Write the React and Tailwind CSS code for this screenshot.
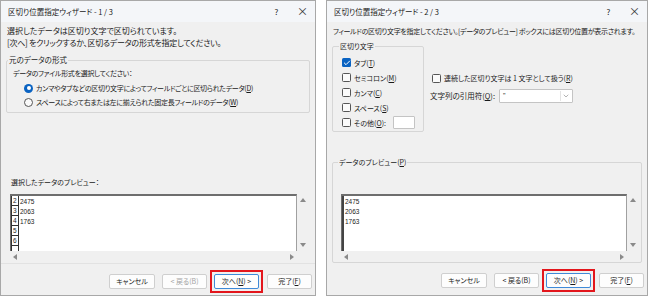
import { Check, ChevronDown } from 'lucide-react'

const U = ({ children }) => <span className="underline underline-offset-1">{children}</span>

function Arrow({ dir }) {
  const pts = {
    up: '0,4 3,0 6,4',
    down: '0,0 3,4 6,0',
    left: '4,0 0,3 4,6',
    right: '0,0 4,3 0,6',
  }[dir]
  const vertical = dir === 'up' || dir === 'down'
  return (
    <svg width={vertical ? 6 : 4} height={vertical ? 4 : 6} viewBox={vertical ? '0 0 6 4' : '0 0 4 6'}>
      <polygon points={pts} fill="#8a8a8a" />
    </svg>
  )
}

function TitleBar({ title }) {
  return (
    <div className="h-[21px] flex items-center pl-[7px] bg-[#f4f6f9] shrink-0">
      <span className="text-[7.5px]">{title}</span>
      <span className="ml-auto w-[27px] text-center text-[8px]">?</span>
      <span className="w-[25px] text-center text-[11px] leading-none text-[#333]">×</span>
    </div>
  )
}

function Btn({ children, disabled, primary, className = '' }) {
  return (
    <div
      className={`h-[15px] w-[45px] flex items-center justify-center rounded-[2px] border bg-[#fdfdfd] text-[7px] ${
        primary ? 'border-[#3f8ad8]' : 'border-[#cfcfcf]'
      } ${disabled ? 'text-[#a3a3a3]' : 'text-[#1a1a1a]'} ${className}`}
    >
      {children}
    </div>
  )
}

function Footer({ backDisabled }) {
  return (
    <div className="h-[32px] shrink-0 flex items-center justify-end pr-[3px] pt-[2px]">
      <Btn className="w-[46px]">キャンセル</Btn>
      <Btn className="ml-[7px]" disabled={backDisabled}>
        {'< 戻る(B)'}
      </Btn>
      <div className="ml-[3px] border-2 border-[#e3161c] p-[2px]">
        <Btn primary>
          次へ(<U>N</U>) &gt;
        </Btn>
      </div>
      <Btn className="ml-[4px]">
        完了(<U>F</U>)
      </Btn>
    </div>
  )
}

function Radio({ on }) {
  return on ? (
    <div className="w-[9px] h-[9px] rounded-full bg-[#0a63c2] flex items-center justify-center shrink-0">
      <div className="w-[4px] h-[4px] rounded-full bg-white" />
    </div>
  ) : (
    <div className="w-[9px] h-[9px] rounded-full border border-[#555] bg-[#fafafa] shrink-0" />
  )
}

function CheckBox({ on }) {
  return on ? (
    <div className="w-[9px] h-[9px] rounded-[1.5px] bg-[#0a63c2] flex items-center justify-center shrink-0">
      <Check size={8} color="white" strokeWidth={3} />
    </div>
  ) : (
    <div className="w-[9px] h-[9px] rounded-[1.5px] border border-[#555] bg-[#fafafa] shrink-0" />
  )
}

function Preview({ withRowNums }) {
  const data = ['2475', '2063', '1763']
  return (
    <div className="flex flex-col">
      <div className="flex">
        <div className="flex-1 h-[57px] bg-white border-t-2 border-l border-[#6e6e6e] border-r border-r-[#a0a0a0] flex font-['Liberation_Sans',sans-serif] text-[6.5px] leading-[10px] overflow-hidden">
          {withRowNums ? (
            <>
              <div className="w-[8px] border-x border-[#333] flex flex-col">
                {[2, 3, 4, 5, 6].map((n) => (
                  <div key={n} className="h-[10px] border-b border-[#333] pl-[1px] leading-[10px]">
                    {n}
                  </div>
                ))}
              </div>
              <div className="pl-[1px] pt-[1px]">
                {data.map((d) => (
                  <div key={d}>{d}</div>
                ))}
              </div>
            </>
          ) : (
            <div className="border-l-2 border-[#444] pl-[1px] pt-[1px] h-full">
              {data.map((d) => (
                <div key={d}>{d}</div>
              ))}
            </div>
          )}
        </div>
        <div className="w-[12px] flex flex-col items-center justify-between py-[4px]">
          <Arrow dir="up" />
          <Arrow dir="down" />
        </div>
      </div>
      <div className="h-[11px] flex items-center justify-between pl-[3px] pr-[15px]">
        <Arrow dir="left" />
        <Arrow dir="right" />
      </div>
    </div>
  )
}

function WizardStep1() {
  return (
    <div className="w-[316px] h-full flex flex-col border border-[#a8a8a8] bg-[#f0f0f0]">
      <TitleBar title="区切り位置指定ウィザード - 1 / 3" />
      <div className="h-[241px] shrink-0 flex flex-col px-[5px] pt-[3px]">
        <div className="pl-[1px]">選択したデータは区切り文字で区切られています。</div>
        <div className="pl-[1px] tracking-[-0.25px]">[次へ] をクリックするか、区切るデータの形式を指定してください。</div>
        <fieldset className="mt-[5px] border border-[#d6d6d6] rounded-[2px] pl-[6px] pb-[3px]">
          <legend className="-ml-[5px] px-[1px] text-[7.5px]">元のデータの形式</legend>
          <div className="text-[7px] tracking-[-0.3px]">
            <div className="mt-[1px]">データのファイル形式を選択してください：</div>
            <div className="mt-[2px] flex items-center h-[14px] pl-[11px] gap-[3px]">
              <Radio on />
              <span>
                カンマやタブなどの区切り文字によってフィールドごとに区切られたデータ(<U>D</U>)
              </span>
            </div>
            <div className="flex items-center h-[14px] pl-[11px] gap-[3px]">
              <Radio />
              <span>
                スペースによって右または左に揃えられた固定長フィールドのデータ(<U>W</U>)
              </span>
            </div>
          </div>
        </fieldset>
        <div className="mt-[63px] pl-[5px] text-[7px]">選択したデータのプレビュー：</div>
        <div className="mt-[6px] pl-[4px] pr-[1px]">
          <Preview withRowNums />
        </div>
      </div>
      <div className="border-t border-[#e2e2e2]" />
      <Footer backDisabled />
    </div>
  )
}

function WizardStep2() {
  const opts = [
    ['タブ', 'T', true],
    ['セミコロン', 'M', false],
    ['カンマ', 'C', false],
    ['スペース', 'S', false],
  ]
  return (
    <div className="w-[322px] h-full flex flex-col border border-[#a8a8a8] bg-[#f0f0f0]">
      <TitleBar title="区切り位置指定ウィザード - 2 / 3" />
      <div className="h-[241px] shrink-0 flex flex-col px-[5px] pt-[3px]">
        <div className="pl-[1px] whitespace-nowrap text-[7px] tracking-[-0.3px]">
          フィールドの区切り文字を指定してください。[データのプレビュー] ボックスには区切り位置が表示されます。
        </div>
        <div className="mt-[3px] flex">
          <fieldset className="w-[92px] border border-[#d6d6d6] rounded-[2px] pl-[9px] pb-[1px] text-[7px]">
            <legend className="-ml-[3px] px-[1px]">区切り文字</legend>
            <div className="mt-[3px]">
              {opts.map(([label, key, on]) => (
                <div key={key} className="h-[15px] flex items-center gap-[3px]">
                  <CheckBox on={on} />
                  <span>
                    {label}(<U>{key}</U>)
                  </span>
                </div>
              ))}
              <div className="h-[15px] flex items-center gap-[3px]">
                <CheckBox />
                <span>
                  その他(<U>O</U>):
                </span>
                <div className="ml-[4px] w-[22px] h-[13px] bg-white border border-[#c4c4c4] rounded-[1px]" />
              </div>
            </div>
          </fieldset>
          <div className="ml-[6px] pt-[31px] flex flex-col text-[7px]">
            <div className="flex items-center gap-[3px] h-[14px] pl-[2px]">
              <CheckBox />
              <span>
                連続した区切り文字は 1 文字として扱う(<U>R</U>)
              </span>
            </div>
            <div className="mt-[4px] flex items-center">
              <span className="text-[7.5px]">
                文字列の引用符(<U>Q</U>):
              </span>
              <div className="ml-[4px] w-[74px] h-[14px] bg-white border border-[#c4c4c4] rounded-[1px] flex items-center pl-[3px]">
                <span className="font-['Liberation_Sans',sans-serif] text-[7px]">"</span>
                <div className="ml-auto h-[10px] border-l border-[#e4e4e4] w-[12px] flex items-center justify-center">
                  <ChevronDown size={8} color="#666" strokeWidth={1.5} />
                </div>
              </div>
            </div>
          </div>
        </div>
        <fieldset className="mt-[24px] border border-[#d6d6d6] rounded-[2px] pl-[8px] pr-[2px]">
          <legend className="-ml-[3px] px-[1px] text-[7px]">
            データのプレビュー(<U>P</U>)
          </legend>
          <div className="mt-[26px]">
            <Preview />
          </div>
        </fieldset>
      </div>
      <Footer />
    </div>
  )
}

export default function App() {
  return (
    <div className="w-[648px] h-[296px] flex gap-[10px] bg-white text-[#1a1a1a] text-[8px] leading-[12px] font-['Noto_Sans_CJK_JP','Noto_Sans',sans-serif] [font-feature-settings:'palt']">
      <WizardStep1 />
      <WizardStep2 />
    </div>
  )
}
